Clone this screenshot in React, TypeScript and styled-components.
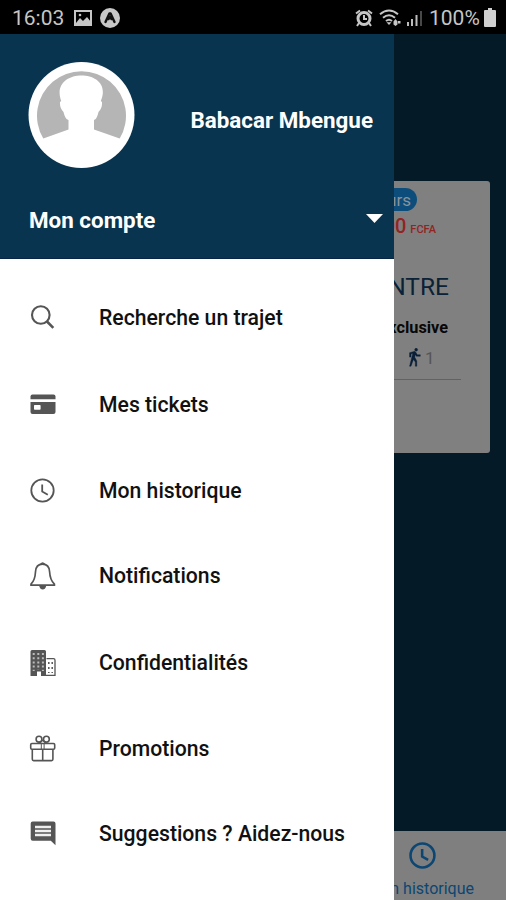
import React from "react";
import styled, { createGlobalStyle } from "styled-components";

const GlobalStyle = createGlobalStyle`
  * { box-sizing: border-box; }
  body { margin: 0; background: #051a28; font-family: Roboto, "Liberation Sans", sans-serif; }
  svg { display: block; flex: none; }
`;

const Phone = styled.div`
  width: 506px;
  height: 900px;
  display: flex;
  flex-direction: column;
  overflow: hidden;
`;

const StatusBar = styled.header`
  height: 34px;
  flex: none;
  display: flex;
  align-items: center;
  justify-content: space-between;
  padding: 1px 10px 0 12px;
  background: #000;
  color: #c6c6c6;
`;

const StatusGroup = styled.div`
  display: flex;
  align-items: center;
`;

const StatusText = styled.span<{ $width: number }>`
  width: ${(p) => p.$width}px;
  font-size: 21px;
  line-height: 34px;
  white-space: nowrap;
`;

const Body = styled.div`
  flex: 1;
  display: flex;
  min-height: 0;
`;

const Drawer = styled.aside`
  width: 394px;
  flex: none;
  background: #fff;
`;

const Profile = styled.div`
  height: 225px;
  padding: 28px 11px 0 28px;
  background: #09344f;
  border-bottom: 1px solid #062547;
  color: #fff;
`;

const Identity = styled.div`
  display: flex;
  align-items: center;
  justify-content: space-between;
  padding-right: 10px;
  height: 107px;
`;

const Name = styled.span`
  font-size: 22.4px;
  font-weight: 700;
  line-height: 30px;
  margin-top: 9px;
  white-space: nowrap;
`;

const Account = styled.div`
  display: flex;
  align-items: center;
  justify-content: space-between;
  margin-top: 33px;
  height: 32px;
`;

const AccountLabel = styled(Name)`
  margin-top: 3px;
  margin-left: 1px;
`;

const Menu = styled.nav`
  padding-top: 16px;
`;

const MenuItem = styled.div<{ $drop?: number }>`
  height: 86px;
  display: flex;
  align-items: center;
  padding-top: ${(p) => p.$drop ?? 0}px;
  padding-left: 28px;
  gap: 41px;
`;

const MenuLabel = styled.span`
  font-size: 21.2px;
  font-weight: 500;
  line-height: 28px;
  color: #111;
  white-space: nowrap;
`;

const Behind = styled.main`
  flex: 1;
  min-width: 0;
  display: flex;
  flex-direction: column;
  justify-content: space-between;
  padding-top: 147px;
  background: #041a27;
  overflow: hidden;
`;

const TripCard = styled.section`
  width: 96px;
  height: 272px;
  display: flex;
  flex-direction: column;
  align-items: flex-start;
  padding-top: 7px;
  background: #808080;
  border-radius: 0 3px 3px 0;
  overflow: hidden;
`;

const Clipped = styled.div<{ $width: number; $height: number }>`
  width: ${(p) => p.$width}px;
  height: ${(p) => p.$height}px;
  display: flex;
  align-items: center;
  justify-content: flex-end;
  overflow: hidden;
  white-space: nowrap;
`;

const Pill = styled(Clipped)`
  padding-right: 6px;
  background: #0d4d7b;
  border-radius: 0 12px 12px 0;
  color: #8b9298;
  font-size: 17px;
`;

const Price = styled(Clipped)`
  margin-top: 1px;
  gap: 4px;
  align-items: baseline;
  color: #922424;
  font-size: 20px;
  font-weight: 500;
  line-height: 29px;
`;

const Currency = styled.span`
  font-size: 11px;
`;

const Stop = styled(Clipped)`
  margin-top: 29px;
  padding-right: 1px;
  color: #0a2136;
  font-size: 24.5px;
`;

const Kind = styled(Clipped)`
  margin-top: 14px;
  color: #080808;
  font-size: 16.3px;
  font-weight: 700;
`;

const Walk = styled.div`
  width: 67px;
  height: 38px;
  display: flex;
  align-items: center;
  gap: 2px;
  margin-top: 3px;
  padding: 0 0 6px 12px;
  border-bottom: 1px solid #626262;
  color: #555;
  font-size: 17px;
`;

const TabBar = styled.footer`
  height: 69px;
  flex: none;
  padding-top: 9px;
  background: #7f7f7f;
  color: #0c4672;
`;

const TabIcon = styled.div`
  padding-left: 13px;
`;

const TabLabel = styled(Clipped)`
  margin-top: 4px;
  font-size: 16px;
`;

const G = "#555";

const SearchIcon = () => (
  <svg width="30" height="30" viewBox="0 0 30 30" fill="none" stroke={G} strokeWidth="2.1">
    <circle cx="12.8" cy="12" r="8.8" />
    <path d="m19 18.5 6.3 6.3" strokeWidth="2.6" />
  </svg>
);

const CardIcon = () => (
  <svg width="30" height="30" viewBox="0 0 30 30" fill={G}>
    <path d="M4.5 4.5h21q2 0 2 2v2.7h-25V6.500q0-2 2-2Z" />
    <path fillRule="evenodd" d="M2.500 12h25v10q0 2-2 2h-21q-2 0-2-2Zm4.200 3.100q-.7 0-.7.700v3.200q0 .7.700.7h5.200q.7 0 .7-.7v-3.200q0-.7-.7-.7Z" />
  </svg>
);

const ClockIcon = ({ size = 30, color = G, stroke = 1.8 }: { size?: number; color?: string; stroke?: number }) => (
  <svg width={size} height={size} viewBox="0 0 30 30" fill="none" stroke={color} strokeWidth={stroke}>
    <circle cx="14.500" cy="14.500" r="11.200" />
    <path d="M14.200 8.500v7l5.600 3.200" />
  </svg>
);

const BellIcon = () => (
  <svg width="30" height="30" viewBox="0 0 30 30" fill="none" stroke={G} strokeWidth="1.700">
    <path d="M14.500 3.200c-5 0-6.700 3-7 7.500-.3 6-1 9-4.500 12.400v1.100h23.400v-1.100c-3.500-3.400-4.500-6.400-4.800-12.400-.3-4.500-2-7.500-7.100-7.500Z" />
    <path d="M12.700 3.200q2-2.400 3.800 0" />
    <path fill={G} stroke="none" d="M11.200 25h7q-1 3.600-3.500 3.600T11.200 25Z" />
  </svg>
);

const BuildingIcon = () => (
  <svg width="30" height="30" viewBox="0 0 30 30">
    <path fill={G} d="M2.500 3.500q0-1.500 1.500-1.500h12.500q1.500 0 1.500 1.500v24.500h-5v-4.500h-4v4.500h-6.500Z" />
    <path stroke="#bbb" strokeWidth="2" strokeDasharray="2 2.200" d="M5.700 5v18M10.300 5v17M14.900 5v18" />
    <path fill="none" stroke={G} strokeWidth="1.300" d="M18.500 10.700h7q1.500 0 1.500 1.500v15.200h-9" />
    <path fill="none" stroke={G} strokeWidth="1.500" strokeDasharray="2 3" d="M20.800 14v11M24.200 14v11" />
  </svg>
);

const GiftIcon = () => (
  <svg width="30" height="30" viewBox="0 0 30 30" fill="none" stroke={G} strokeWidth="1.600">
    <rect x="2.700" y="9.500" width="24" height="5.800" rx="1.200" />
    <path d="M4.300 15.500v9.800q0 1.300 1.300 1.300h18q1.300 0 1.300-1.300v-9.800M14.700 15.500v11" />
    <path d="M13.300 9.500v6M16.100 9.500v6" strokeWidth="1" />
    <circle cx="11" cy="5.200" r="2.900" />
    <circle cx="18.400" cy="5.200" r="2.900" />
    <path d="m14.700 6-3.500 3.500M14.700 6l3.500 3.500" />
  </svg>
);

const CommentIcon = () => (
  <svg width="30" height="30" viewBox="0 0 30 30">
    <path fill={G} d="M4.700 2.500h20.800q2 0 2 2v21.800l-4.700-4.500H4.700q-2 0-2-2V4.500q0-2 2-2Z" />
    <path stroke="#eee" strokeWidth="2.300" d="M7 8h16M7 12h16M7 16h16" />
  </svg>
);

const Avatar = () => (
  <svg width="107" height="107" viewBox="0 0 107 107">
    <circle cx="53.500" cy="53" r="53" fill="#fff" />
    <path fill="#b5b5b5" d="M15.300 76.500A44.500 44.500 0 1 1 91.700 76.500L66 67.500V58q3-1 4.500-8 4-4 3.500-10l-1.200-1C80 22 67 13.500 53.500 13.500S27 22 33.200 39L32 40q-.5 6 3.500 10 1.500 7 5 8v9.500Z" />
  </svg>
);

const PictureIcon = () => (
  <svg width="18" height="18" viewBox="0 0 18 18">
    <path fill="none" stroke="#c6c6c6" strokeWidth="2" d="M1 2h16v14H1Z" />
    <path fill="#c6c6c6" d="m2 14 4-5 3 3 4-4 4 5v3H2Z" />
    <circle cx="6" cy="6" r="1.300" fill="#c6c6c6" />
  </svg>
);

const ExpoIcon = () => (
  <svg width="20" height="20" viewBox="0 0 20 20">
    <circle cx="10" cy="10" r="10" fill="#c8c8c8" />
    <path fill="none" stroke="#111" strokeWidth="2.400" strokeLinecap="round" strokeLinejoin="round" d="m5.500 14 3.900-8.500h1.200l3.900 8.500M8.500 11l1.500-2 1.500 2" />
  </svg>
);

const AlarmIcon = () => (
  <svg width="18" height="18" viewBox="0 0 18 18" fill="none" stroke="#c6c6c6" strokeWidth="2">
    <circle cx="9" cy="9.500" r="6" strokeWidth="3" />
    <path d="M9 6v4h3M1 4.500l4-3M17 4.500l-4-3M4 14l-2 3M14 14l2 3" />
  </svg>
);

const WifiIcon = () => (
  <svg width="22" height="18" viewBox="0 0 22 18" fill="none" stroke="#c6c6c6" strokeWidth="2">
    <path d="M1 5.200q9-7.400 18 0M4 8.700q6-4.900 12 0M7 12q3-2.500 6 0" />
    <path fill="#c6c6c6" stroke="none" d="m10 16-2.500-2.700h5ZM14.500 12.500l2-2.500 2 2.500v3l-2 1.500-2-1.500ZM19 12h2.500v2.500H19Z" />
  </svg>
);

const SignalIcon = () => (
  <svg width="16" height="18" viewBox="0 0 16 18" fill="#bbb">
    <path d="M0 13h2v4H0ZM4 10h2v7H4ZM8.500 6h2v11h-2Z" />
    <path fill="#484848" d="M13 2h2v15h-2Z" />
  </svg>
);

const BatteryIcon = () => (
  <svg width="12" height="19" viewBox="0 0 12 19" fill="#d0d0d0">
    <path d="M4 0h4v2h3q1 0 1 1v15q0 1-1 1H1q-1 0-1-1V3q0-1 1-1h3Z" />
  </svg>
);

const WalkIcon = () => (
  <svg width="17" height="19" viewBox="3 0 18 23" fill="#0a2038">
    <path d="M14.120 10H19V8.200h-3.620l-2-3.330c-.3-.5-.84-.84-1.460-.84-.18 0-.34.030-.5.080L6 5.800V11h1.800V7.330l2.110-.66L6 22h1.800l2.870-8.110L13 17v5h1.800v-6.410l-2.490-4.540.73-2.870M14 3.800c1 0 1.800-.8 1.800-1.800S15 .2 14 .2 12.200 1 12.200 2s.8 1.800 1.800 1.800Z" stroke="#0a2038" strokeWidth=".5" />
  </svg>
);

const CaretIcon = () => (
  <svg width="17" height="9" viewBox="0 0 17 9">
    <path fill="#fff" d="M0 0h17L8.500 9Z" />
  </svg>
);

const items = [
  { label: "Recherche un trajet", Icon: SearchIcon },
  { label: "Mes tickets", Icon: CardIcon, drop: 2 },
  { label: "Mon historique", Icon: ClockIcon, drop: 2 },
  { label: "Notifications", Icon: BellIcon },
  { label: "Confidentialités", Icon: BuildingIcon, drop: 1 },
  { label: "Promotions", Icon: GiftIcon, drop: 2 },
  { label: "Suggestions ? Aidez-nous", Icon: CommentIcon },
];

const StatusLeft = styled(StatusGroup)`
  gap: 8px;
`;

const StatusRight = styled(StatusGroup)`
  gap: 6px;
`;

export default function App() {
  return (
    <Phone>
      <GlobalStyle />
      <StatusBar>
        <StatusLeft>
          <StatusText $width={54}>16:03</StatusText>
          <PictureIcon />
          <ExpoIcon />
        </StatusLeft>
        <StatusRight>
          <AlarmIcon />
          <WifiIcon />
          <SignalIcon />
          <StatusText $width={49}>100%</StatusText>
          <BatteryIcon />
        </StatusRight>
      </StatusBar>
      <Body>
        <Drawer>
          <Profile>
            <Identity>
              <Avatar />
              <Name>Babacar Mbengue</Name>
            </Identity>
            <Account>
              <AccountLabel>Mon compte</AccountLabel>
              <CaretIcon />
            </Account>
          </Profile>
          <Menu>
            {items.map(({ label, Icon, drop }) => (
              <MenuItem key={label} $drop={drop}>
                <Icon />
                <MenuLabel>{label}</MenuLabel>
              </MenuItem>
            ))}
          </Menu>
        </Drawer>
        <Behind>
          <TripCard>
            <Pill $width={23} $height={23}>urs</Pill>
            <Price $width={42} $height={30}>
              <span>00</span>
              <Currency>FCFA</Currency>
            </Price>
            <Stop $width={56} $height={30}>NTRE</Stop>
            <Kind $width={54} $height={24}>xclusive</Kind>
            <Walk>
              <WalkIcon />
              <span>1</span>
            </Walk>
          </TripCard>
          <TabBar>
            <TabIcon>
              <ClockIcon size={32} color="#0c4672" stroke={2.4} />
            </TabIcon>
            <TabLabel $width={80} $height={24}>n historique</TabLabel>
          </TabBar>
        </Behind>
      </Body>
    </Phone>
  );
}
